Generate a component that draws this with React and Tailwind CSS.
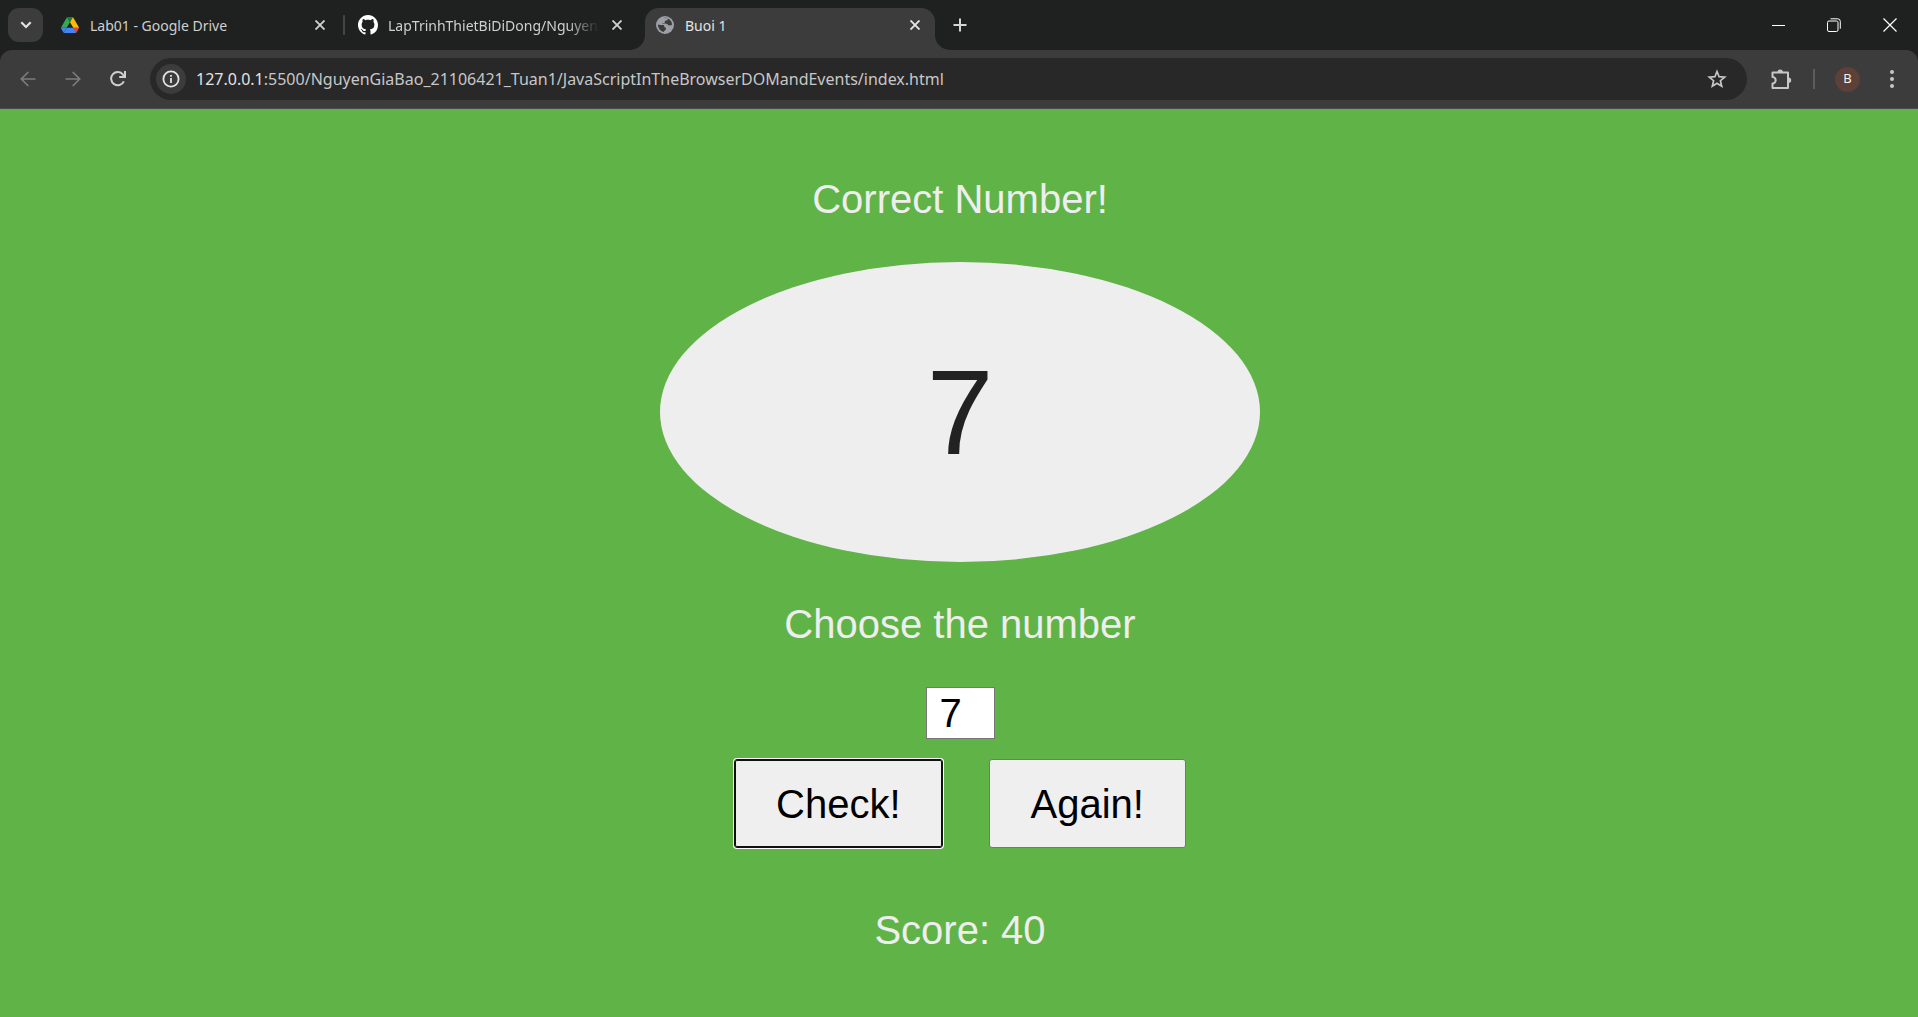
import { useState } from "react";

const UI_FONT = "font-['Noto_Sans',sans-serif]";

function DriveIcon() {
  return (
    <svg viewBox="0 0 87.3 78" className="h-4 w-[18px] shrink-0" aria-hidden="true">
      <path fill="#4285f4" d="m6.6 66.85 3.85 6.65c.8 1.4 1.95 2.5 3.3 3.3l13.75-23.8h-27.5c0 1.55.4 3.1 1.2 4.5z" />
      <path fill="#34a853" d="m43.65 25-13.75-23.8c-1.35.8-2.5 1.9-3.3 3.3l-25.4 44a9.06 9.06 0 0 0-1.2 4.5h27.5z" />
      <path fill="#ea4335" d="m73.55 76.8c1.35-.8 2.5-1.9 3.3-3.3l1.6-2.75 7.65-13.25c.8-1.4 1.2-2.95 1.2-4.5h-27.502l5.852 11.5z" />
      <path fill="#188038" d="m43.65 25 13.75-23.8c-1.35-.8-2.9-1.2-4.5-1.2h-18.5c-1.6 0-3.15.45-4.5 1.2z" />
      <path fill="#4285f4" d="m59.8 53h-32.3l-13.75 23.8c1.35.8 2.9 1.2 4.5 1.2h50.8c1.6 0 3.15-.45 4.5-1.2z" />
      <path fill="#fbbc04" d="m73.4 26.5-12.7-22c-.8-1.4-1.95-2.5-3.3-3.3l-13.75 23.8 16.15 28h27.45c0-1.55-.4-3.1-1.2-4.5z" />
    </svg>
  );
}

function GithubIcon() {
  return (
    <svg viewBox="0 0 16 16" className="size-5 shrink-0" fill="#fff" aria-hidden="true">
      <path d="M8 0C3.58 0 0 3.58 0 8c0 3.54 2.29 6.53 5.47 7.59.4.07.55-.17.55-.38 0-.19-.01-.82-.01-1.49-2.01.37-2.53-.49-2.69-.94-.09-.23-.48-.94-.82-1.13-.28-.15-.68-.52-.01-.53.63-.01 1.08.58 1.23.82.72 1.21 1.87.87 2.33.66.07-.52.28-.87.51-1.07-1.78-.2-3.64-.89-3.64-3.95 0-.87.31-1.59.82-2.15-.08-.2-.36-1.02.08-2.12 0 0 .67-.21 2.2.82.64-.18 1.32-.27 2-.27s1.36.09 2 .27c1.53-1.04 2.2-.82 2.2-.82.44 1.1.16 1.92.08 2.12.51.56.82 1.27.82 2.15 0 3.07-1.87 3.75-3.65 3.95.29.25.54.73.54 1.48 0 1.07-.01 1.93-.01 2.2 0 .21.15.46.55.38A8.01 8.01 0 0 0 16 8c0-4.42-3.58-8-8-8Z" />
    </svg>
  );
}

function GlobeIcon() {
  return (
    <svg viewBox="0 0 18 18" className="size-[18px] shrink-0" aria-hidden="true">
      <circle cx="9" cy="9" r="9" fill="#9aa0a6" />
      <path fill="#3c3c3c" d="M2 8.4c2 .5 3.6 .6 5 .5 1 0 1.300 .7 1.300 1.700 0 .9 .8 1.100 1.600 1.100v1.500c0 .6-.4 1-1 1.100l-1.300 1.700A7.200 7.200 0 0 1 2 8.400zM7.200 2.100 11.600 2.200c.6.6.3 1.700-.5 2.100-.9.400-2 .3-2.200 1-.2.700.1 1.400-.6 1.700-.6.3-1.800-.2-2.100.4 2 .2 4-.2 5 .7.7.6 1.200 1.400 2.100 1.400.9 0 1.700-.5 2.700-.6A7 7 0 0 0 7.200 2.100z" />
    </svg>
  );
}

function CloseButton({ label, bright }) {
  return (
    <button type="button" aria-label={label} className="grid size-5 shrink-0 place-items-center">
      <svg viewBox="0 0 10 10" className={bright ? "size-[10px] text-[#e6e6e6]" : "size-[10px] text-[#d0d0d0]"} fill="none" stroke="currentColor" strokeWidth="1.9" aria-hidden="true">
        <path d="M.5.5l9 9M9.500.5l-9 9" />
      </svg>
    </button>
  );
}

function TabStrip() {
  return (
    <header className="flex h-[50px] items-stretch bg-[#1f2120]">
      <div className="flex min-w-0 flex-1">
        <button type="button" aria-label="Search tabs" className="ml-2 mt-2 grid h-[34px] w-[35px] shrink-0 place-items-center rounded-[11px] bg-[#3c3c3c]">
          <svg viewBox="0 0 12 8" className="h-2 w-3" fill="none" stroke="#e3e3e3" strokeWidth="2.2" aria-hidden="true">
            <path d="M1.300 1.300 6 6l4.700-4.700" />
          </svg>
        </button>

        <div className="ml-[18px] flex h-[50px] w-[269px] shrink-0 items-center">
          <DriveIcon />
          <span className="ml-[11px] flex-1 whitespace-nowrap text-[14px] text-[#cfcfcf]">Lab01 - Google Drive</span>
          <CloseButton label="Close Lab01 - Google Drive" />
        </div>
        <div className="ml-[13px] mt-[15px] h-5 w-[2px] shrink-0 rounded bg-[#444746]" />

        <div className="ml-[13px] flex h-[50px] w-[269px] shrink-0 items-center">
          <GithubIcon />
          <span className="ml-[10px] mr-2 flex-1 whitespace-nowrap text-[14px] text-[#cfcfcf] mask-r-from-85% mask-r-to-100%">LapTrinhThietBiDiDong/Nguyen</span>
          <CloseButton label="Close LapTrinhThietBiDiDong" />
        </div>

        <div className="ml-[3px] flex shrink-0 bg-[#3c3c3c]">
          <div className="w-[15px] rounded-br-[15px] bg-[#1f2120]" />
        </div>
        <div className="flex shrink-0 bg-[linear-gradient(#1f2120_50%,#3c3c3c_50%)]">
          <div className="mt-2 flex h-[42px] w-[290px] items-center rounded-t-[14px] bg-[#3c3c3c] pb-2 pl-[11px] pr-[10px]">
            <GlobeIcon />
            <span className="ml-[11px] flex-1 text-[14px] text-[#e3e3e3]">Buoi 1</span>
            <CloseButton label="Close Buoi 1" bright />
          </div>
        </div>
        <div className="flex shrink-0 bg-[#3c3c3c]">
          <div className="w-[15px] rounded-bl-[15px] bg-[#1f2120]" />
        </div>
        <button type="button" aria-label="New tab" className="grid h-[50px] w-5 shrink-0 place-items-center">
          <svg viewBox="0 0 14 14" className="size-[14px]" stroke="#d6d6d6" strokeWidth="2" aria-hidden="true">
            <path d="M7 .5v13M.5 7h13" />
          </svg>
        </button>
      </div>

      <div className="flex shrink-0 items-center">
        <button type="button" aria-label="Minimize" className="grid h-[50px] w-14 place-items-center">
          <svg viewBox="0 0 13 13" className="size-[13px]" stroke="#fff" aria-hidden="true">
            <path d="M0 6.500h13" />
          </svg>
        </button>
        <button type="button" aria-label="Restore" className="grid h-[50px] w-14 place-items-center">
          <svg viewBox="0 0 14 14" className="size-[14px]" fill="none" stroke="#fff" aria-hidden="true">
            <rect x=".5" y="3" width="10.500" height="10.500" rx="1.500" />
            <path d="M3.500.8h7.200a2.600 2.600 0 0 1 2.600 2.600v7.300" />
          </svg>
        </button>
        <button type="button" aria-label="Close window" className="grid h-[50px] w-14 place-items-center">
          <svg viewBox="0 0 14 14" className="size-[14px]" stroke="#fff" strokeWidth="1.200" aria-hidden="true">
            <path d="M.5.5l13 13M13.500.5l-13 13" />
          </svg>
        </button>
      </div>
    </header>
  );
}

function Toolbar() {
  return (
    <div className="bg-[#1f2120]">
      <nav aria-label="Toolbar" className="flex h-[59px] items-center rounded-t-[12px] border-b border-[#4b4b4b] bg-[#3c3c3c]">
        <button type="button" aria-label="Back" className="ml-5 grid size-4 shrink-0 place-items-center">
          <svg viewBox="0 0 16 16" className="size-4" fill="none" stroke="#7c7c7c" strokeWidth="1.700" aria-hidden="true">
            <path d="M15.500 8H1.500M8.300 1 1.300 8l7 7" />
          </svg>
        </button>
        <button type="button" aria-label="Forward" className="ml-[29px] grid size-4 shrink-0 place-items-center">
          <svg viewBox="0 0 16 16" className="size-4" fill="none" stroke="#7c7c7c" strokeWidth="1.700" aria-hidden="true">
            <path d="M.5 8h14M7.700 1l7 7-7 7" />
          </svg>
        </button>
        <button type="button" aria-label="Reload" className="ml-[29px] grid size-4 shrink-0 place-items-center">
          <svg viewBox="0 0 16 16" className="size-4" fill="none" stroke="#d0d0d0" strokeWidth="2" aria-hidden="true">
            <path d="M13.800 10.300A6.600 6.600 0 1 1 13 3.700L14.800 5.500" />
            <path d="M15 0v6H9.200" />
          </svg>
        </button>

        <div className="ml-6 flex h-[42px] min-w-0 flex-1 items-center rounded-full bg-[#282828] pl-[6px] pr-5">
          <button type="button" aria-label="View site information" className="grid size-[30px] shrink-0 place-items-center rounded-full bg-[#3c3c3c]">
            <svg viewBox="0 0 18 18" className="size-[18px]" fill="none" stroke="#e3e3e3" strokeWidth="1.800" aria-hidden="true">
              <circle cx="9" cy="9" r="7.600" />
              <path d="M9 8v5M9 5v1.800" />
            </svg>
          </button>
          <span className="ml-[10px] flex-1 truncate text-[16px] text-[#c7c7c7]">
            <span className="text-[#e3e3e3]">127.0.0.1</span>:5500/NguyenGiaBao_21106421_Tuan1/JavaScriptInTheBrowserDOMandEvents/index.html
          </span>
          <button type="button" aria-label="Bookmark this tab" className="grid size-5 shrink-0 place-items-center">
            <svg viewBox="0 0 20 20" className="size-5" fill="none" stroke="#c7c7c7" strokeWidth="1.700" strokeLinejoin="miter" aria-hidden="true">
              <path d="M10 2.500l2.100 5.200 5.600.4-4.300 3.600 1.300 5.500L10 14.200l-4.700 3 1.300-5.500-4.300-3.600 5.600-.4z" />
            </svg>
          </button>
        </div>

        <button type="button" aria-label="Extensions" className="ml-6 grid size-[21px] shrink-0 place-items-center">
          <svg viewBox="0 0 21 21" className="size-[21px]" fill="none" stroke="#c7c7c7" strokeWidth="2" strokeLinejoin="round" aria-hidden="true">
            <path d="M1.500 3.500h15.500v15.500H1.500v-4.500a3.200 3.200 0 0 0 0-6.400z" />
            <path fill="#c7c7c7" stroke="none" d="M6.500 3.200a2.700 2.700 0 0 1 5.400 0zM17.500 8.500a2.700 2.700 0 0 1 0 5.400z" />
          </svg>
        </button>
        <div className="ml-[21px] h-5 w-[2px] shrink-0 bg-[#5c5c5c]" />
        <button type="button" aria-label="Profile" className="ml-5 grid size-[25px] shrink-0 place-items-center rounded-full bg-[#5d4037] text-[13px] text-[#f1f1f1]">
          B
        </button>
        <button type="button" aria-label="Menu" className="ml-[22px] mr-4 grid size-5 shrink-0 place-items-center">
          <svg viewBox="0 0 20 20" className="size-5" fill="#c7c7c7" aria-hidden="true">
            <circle cx="10" cy="3" r="2" />
            <circle cx="10" cy="10" r="2" />
            <circle cx="10" cy="17" r="2" />
          </svg>
        </button>
      </nav>
    </div>
  );
}

function Game() {
  const [guess, setGuess] = useState("7");
  return (
    <main className="flex flex-1 flex-col items-center bg-[#60b347] pl-[2px] pt-[67px] font-['Liberation_Sans',Arial,sans-serif] text-[40px] leading-[46px] text-[#eee]">
      <p>Correct Number!</p>
      <div className="mt-10 grid h-[300px] w-[600px] place-items-center rounded-[50%] bg-[#eee] text-[120px] leading-none text-[#222]">7</div>
      <label htmlFor="guess" className="mt-[39px]">Choose the number</label>
      <input
        id="guess"
        inputMode="numeric"
        value={guess}
        onChange={(e) => setGuess(e.target.value)}
        className="mt-10 h-[52px] w-[69px] border border-[#767676] bg-white px-[13px] text-black"
      />
      <div className="mt-5 flex gap-[46px] text-black">
        <button type="button" className="h-[89px] rounded-[3px] border border-[#101010] bg-[#efefef] px-[41px] shadow-[inset_0_0_0_1px_#101010,0_0_0_1px_#fff]">Check!</button>
        <button type="button" className="h-[89px] rounded-[3px] border border-[#767676] bg-[#efefef] px-[41px]">Again!</button>
      </div>
      <p className="mt-[59px]">Score: 40</p>
    </main>
  );
}

export default function App() {
  return (
    <div className={`flex min-h-screen flex-col ${UI_FONT}`}>
      <TabStrip />
      <Toolbar />
      <Game />
    </div>
  );
}
